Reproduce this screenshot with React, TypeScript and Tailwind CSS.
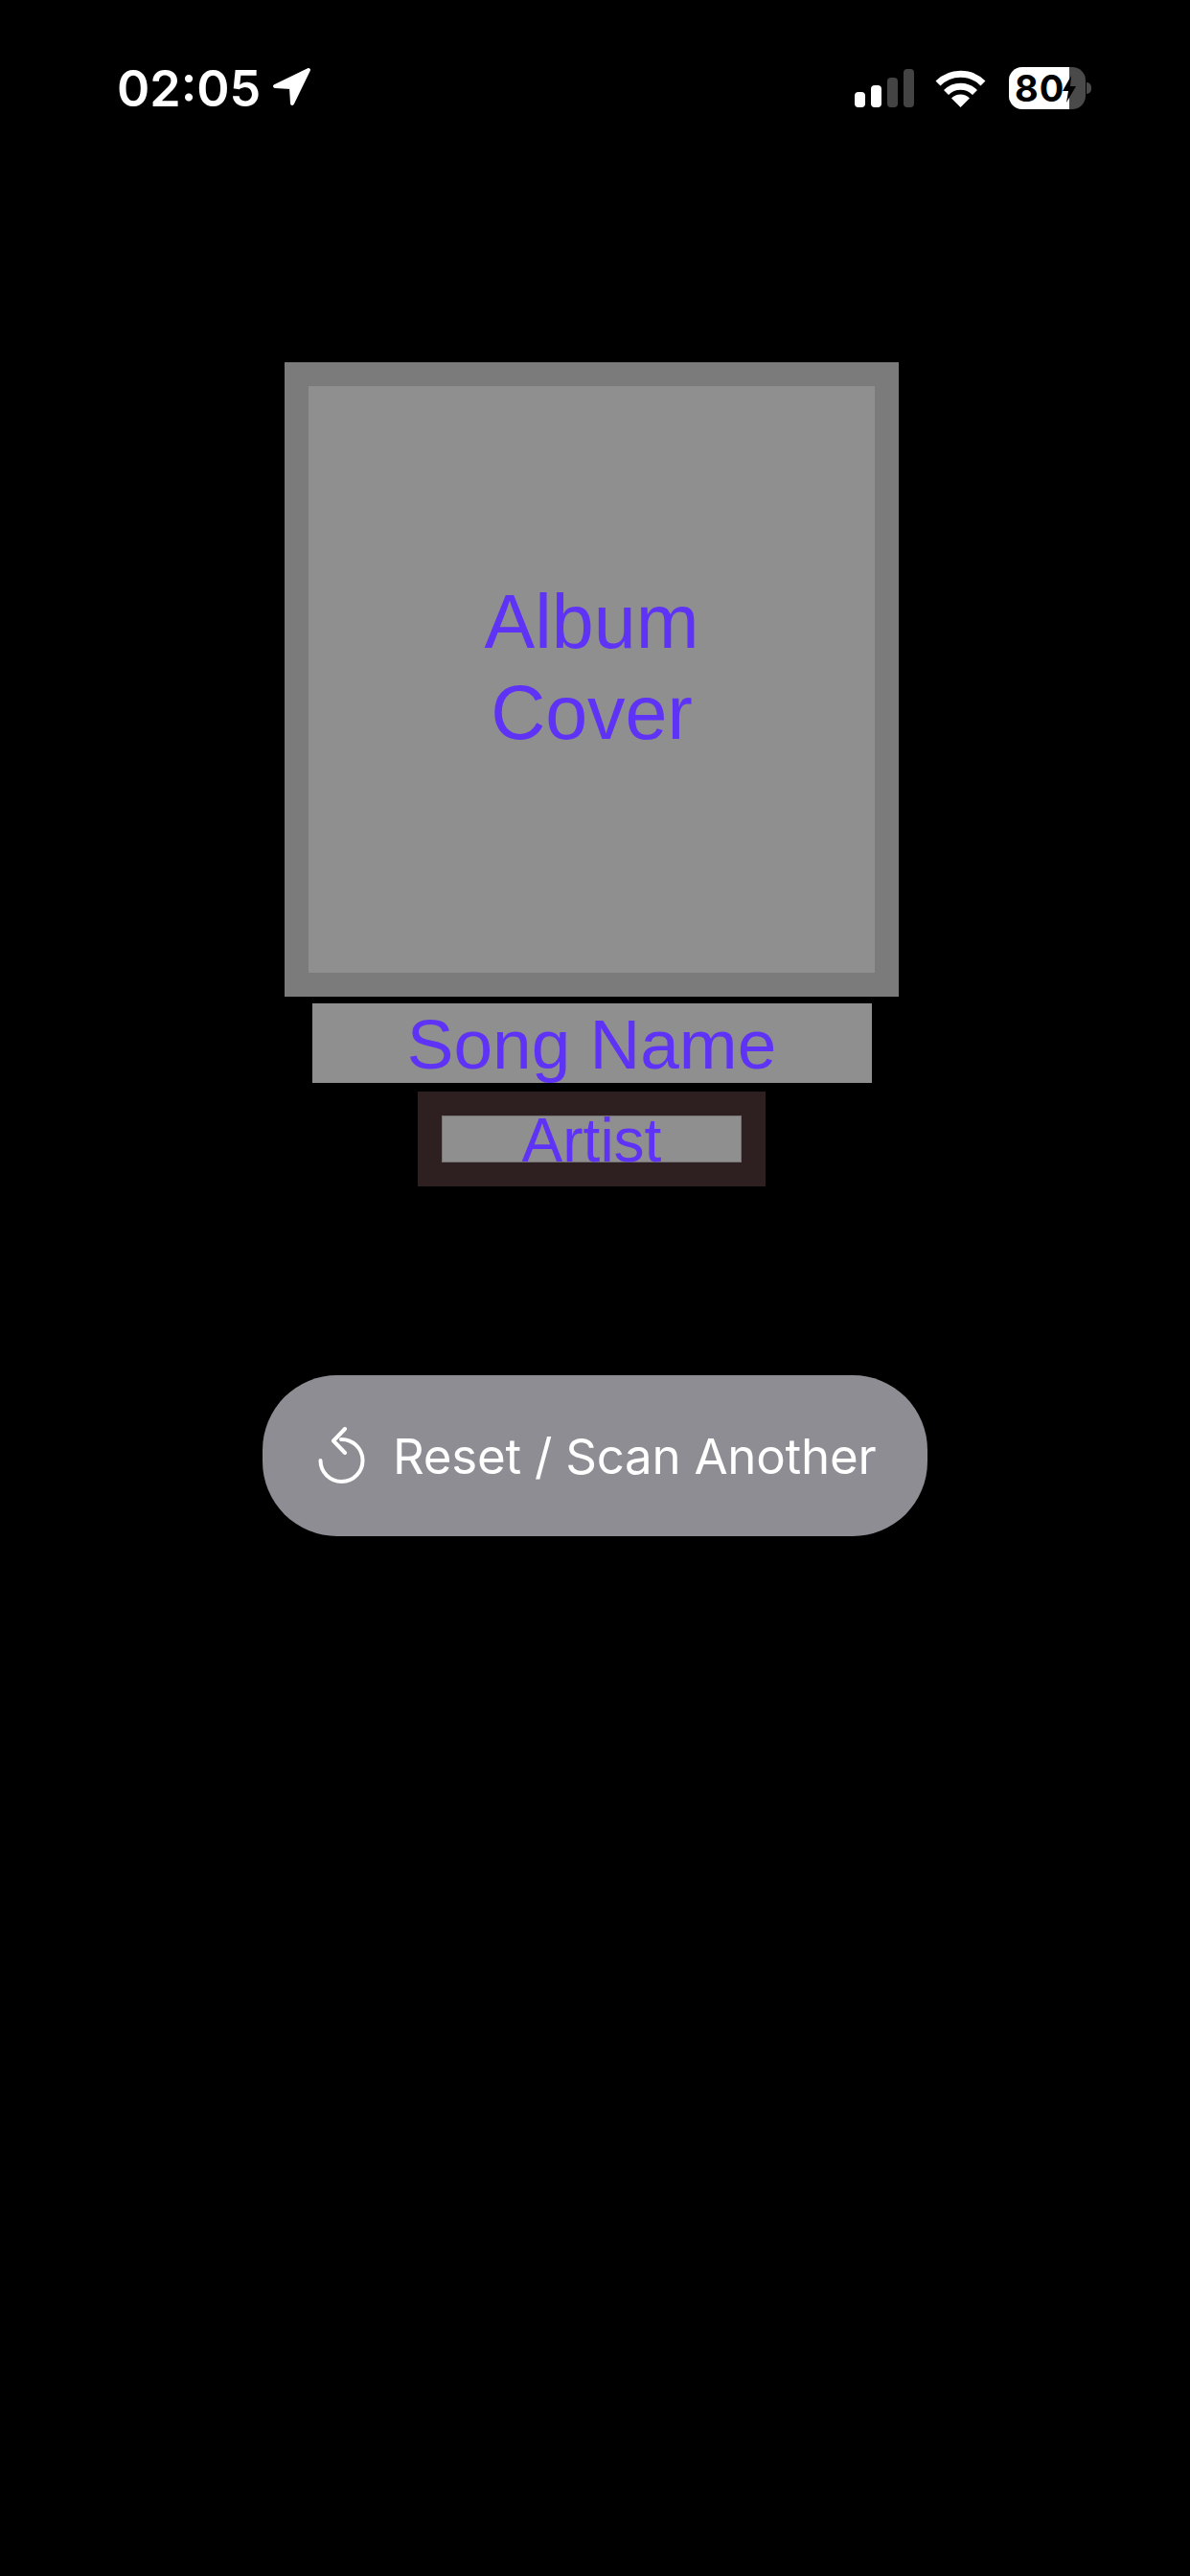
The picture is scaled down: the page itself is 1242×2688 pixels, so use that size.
function StatusBar() {
  return (
    <div className="flex h-[114px] items-end justify-between pl-[122px] pr-[103px] font-['Inter',sans-serif] text-white">
      <div className="mb-[-4px] flex items-center gap-[12px]">
        <span className="text-[52px] leading-[50px] font-semibold">02:05</span>
        <svg className="mb-[6px]" width="41" height="41" viewBox="0 0 41 41" fill="white" stroke="white" strokeWidth="4" strokeLinejoin="round">
          <path d="M38 3 L3 20 L20 21 L21 38 Z" />
        </svg>
      </div>
      <div className="flex items-center">
        <div className="flex h-[40px] items-end gap-[6px]">
          <span className="h-[16px] w-[11px] rounded-[4px] bg-white" />
          <span className="h-[23px] w-[11px] rounded-[4px] bg-white" />
          <span className="h-[31px] w-[11px] rounded-[4px] bg-[#444444]" />
          <span className="h-[40px] w-[11px] rounded-[4px] bg-[#444444]" />
        </div>
        <svg className="ml-[22px]" width="53" height="40" viewBox="0 0 53 40" fill="white">
          <path d="M3 15 A33 33 0 0 1 50 15" fill="none" stroke="white" strokeWidth="7" />
          <path d="M11.5 24.5 A21 21 0 0 1 41.5 24.5" fill="none" stroke="white" strokeWidth="7" />
          <path d="M26.5 40 L17 30.5 A13.5 13.5 0 0 1 36 30.5 Z" />
        </svg>
        <div className="ml-[24px] flex items-center">
          <div className="relative flex h-[44px] w-[80px] overflow-hidden rounded-[14px] bg-[#4a4a4a]">
            <div className="flex w-[63px] items-center bg-white pl-[6px] text-[38px] leading-[44px] font-bold tracking-[1px] text-black">
              80
            </div>
            <svg className="absolute left-[55px] top-[9px]" width="16" height="28" viewBox="0 0 16 28" fill="black">
              <path d="M10 0 L1 16 H7 L5 28 L15 11 H9 Z" />
            </svg>
          </div>
          <span className="ml-[1px] h-[12px] w-[5px] rounded-r-full bg-[#4a4a4a]" />
        </div>
      </div>
    </div>
  );
}

export default function App() {
  return (
    <div className="h-[2688px] w-[1242px] bg-black">
      <StatusBar />
      <div className="flex flex-col items-center pt-[264px] font-['Liberation_Sans',sans-serif] text-[#5e33f5]">
        <div className="mr-[7px] flex flex-col items-center">
          <div className="h-[662px] w-[641px] bg-[#7b7b7b] p-[25px]">
            <div className="flex h-full w-full items-center justify-center bg-[#8f8f8f] pb-[26px] text-center text-[79px] leading-[95px]">
              Album
              <br />
              Cover
            </div>
          </div>
          <div className="mt-[7px] h-[83px] w-[584px] bg-[#8f8f8f] text-center text-[73px] leading-[85px]">
            Song Name
          </div>
          <div className="mt-[9px] h-[99px] w-[363px] bg-[#2e1f20] px-[25px] py-[25px]">
            <div className="h-[49px] border border-[#757575] bg-[#8f8f8f] text-center text-[64px] leading-[50px]">
              Artist
            </div>
          </div>
        </div>
        <button className="mt-[197px] flex h-[168px] w-[694px] items-center gap-[28px] rounded-[78px] bg-[#8e8d93] pl-[58px] font-['Inter',sans-serif] text-[51px] font-normal tracking-[-0.25px] text-white">
          <svg width="50" height="60" viewBox="0 0 50 60" fill="none" stroke="white" strokeWidth="4" strokeLinecap="round" strokeLinejoin="round">
            <path d="M24 13 A22 22 0 1 1 2.5 35" />
            <path d="M28 2 L16 14.5 L28 27" />
          </svg>
          <span className="pt-[2px]">Reset / Scan Another</span>
        </button>
      </div>
    </div>
  );
}
